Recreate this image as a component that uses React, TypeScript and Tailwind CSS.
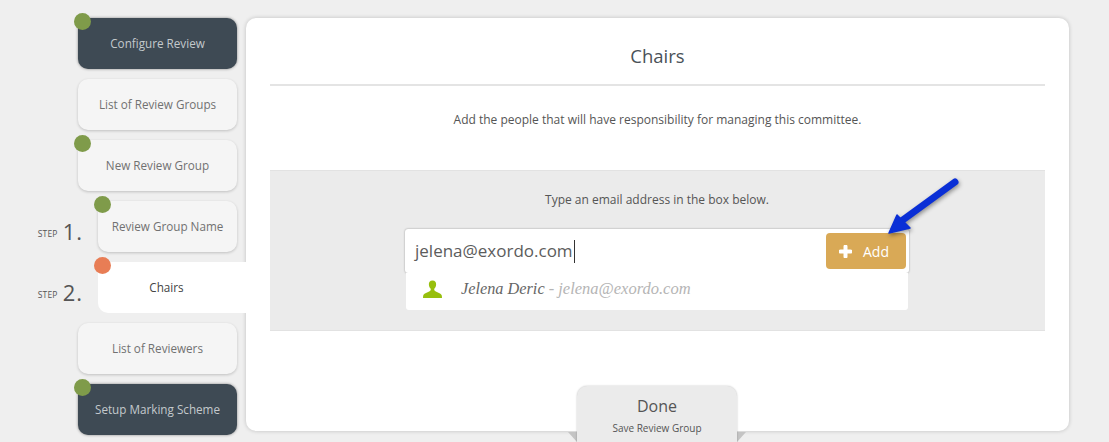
const sans = "font-['Open_Sans',sans-serif]"

type StepProps = {
    label: string
    dot?: "green" | "orange"
    dark?: boolean
    indent?: boolean
    active?: boolean
    step?: string
}

const steps: StepProps[] = [
    { label: "Configure Review", dot: "green", dark: true },
    { label: "List of Review Groups" },
    { label: "New Review Group", dot: "green" },
    { label: "Review Group Name", dot: "green", indent: true, step: "1." },
    { label: "Chairs", dot: "orange", indent: true, active: true, step: "2." },
    { label: "List of Reviewers" },
    { label: "Setup Marking Scheme", dot: "green", dark: true },
]

function StepItem({ label, dot, dark, indent, active, step }: StepProps) {
    return (
        <div className="flex h-[51px]">
            <div className={`flex shrink-0 items-center justify-end ${indent ? "w-[98px] pr-[15px]" : "w-[78px]"}`}>
                {step && (
                    <div className="mt-[9px] flex items-center gap-[5px] text-[#555]">
                        <span className="mt-[6px] text-[8.5px] leading-none tracking-[0.2px]">STEP</span>
                        <span className="text-[22px] leading-none tracking-[1px]">{step}</span>
                    </div>
                )}
            </div>
            <div
                className={`relative flex items-center justify-center text-[11.7px] ${
                    active
                        ? "z-10 w-[148px] rounded-l-[10px] bg-white text-[#444]"
                        : dark
                          ? "w-[159px] rounded-[10px] bg-[#3e4a54] text-[#c4c9cc] shadow-[0_0_3px_rgba(0,0,0,0.45)]"
                          : `rounded-[10px] bg-[#f5f5f5] text-[#717171] shadow-[0_1px_3px_rgba(0,0,0,0.2)] ${indent ? "w-[139px]" : "w-[159px]"}`
                }`}
            >
                {dot && (
                    <span
                        className={`absolute top-[-5px] left-[-4px] h-[17px] w-[17px] rounded-full ${
                            dot === "green" ? "bg-[#7f9b4a]" : "bg-[#e87d55]"
                        }`}
                    />
                )}
                <span className={active ? "pr-[11px]" : ""}>{label}</span>
            </div>
        </div>
    )
}

function PlusIcon() {
    return (
        <svg width="13" height="13" viewBox="0 0 13 13" className="shrink-0">
            <path d="M6.5 1.5v10M1.500 6.5h10" stroke="#fff" strokeWidth="4" strokeLinecap="round" />
        </svg>
    )
}

function PersonIcon() {
    return (
        <svg width="19" height="19" viewBox="0 0 20 19" className="mb-[5px]">
            <path
                d="M10 0C7.2 0 6 2 6.2 4.4c.1 1.7.9 3.2 1.8 4.1.3.4.3 1.700-.3 2.200C6 12.100 1.200 13.300.4 15.200.1 16 0 17.200 0 18.500h20c0-1.300-.1-2.500-.4-3.300-.8-1.900-5.600-3.100-7.300-4.500-.6-.5-.6-1.800-.3-2.200.9-.9 1.700-2.400 1.800-4.100C14 2 12.800 0 10 0z"
                fill="#97bf0d"
            />
        </svg>
    )
}

function BlueArrow() {
    return (
        <svg width="90" height="70" viewBox="0 0 90 70" className="absolute top-[154px] left-[636px] z-20 overflow-visible drop-shadow-[1px_2px_2px_rgba(0,0,0,0.4)]">
            <path d="M73 10 L18 50" stroke="#0a2fd6" strokeWidth="7" strokeLinecap="round" fill="none" />
            <path d="M7 61 L15 43 L28 56 Z" fill="#0a2fd6" stroke="#0a2fd6" strokeWidth="1.500" strokeLinejoin="round" />
        </svg>
    )
}

export default function App() {
    return (
        <div className={`h-[442px] w-[1109px] overflow-hidden bg-[#efefef] ${sans}`}>
            <div className="flex pt-[18px]">
                <div className="flex w-[246px] shrink-0 flex-col gap-[10px]">
                    {steps.map(s => (
                        <StepItem key={s.label} {...s} />
                    ))}
                </div>

                <div className="relative h-[413px] w-[823px] rounded-[10px] bg-white px-[24px] shadow-[0_0_4px_rgba(0,0,0,0.2)]">
                    <div className="flex h-[68px] items-end justify-center border-b-2 border-[#e4e4e4] pb-[16px] text-[18.5px] leading-[24px] text-[#4a5158]">
                        Chairs
                    </div>
                    <p className="mt-[26px] text-center text-[12px] leading-[16px] text-[#555]">
                        Add the people that will have responsibility for managing this committee.
                    </p>

                    <div className="mt-[42px] flex h-[161px] flex-col items-center border-y border-[#e2e2e2] bg-[#ebebeb] pr-px">
                        <p className="mt-[21px] text-[12px] leading-[16px] text-[#555]">Type an email address in the box below.</p>
                        <div className="mt-[21px] flex h-[44px] w-[504px] items-center justify-between rounded-[3px] bg-white pr-[3px] pl-[10px] shadow-[0_0_2px_rgba(0,0,0,0.4)]">
                            <div className="flex items-center text-[17px] leading-[24px] text-[#5c5c5c]">
                                jelena@exordo.com
                                <span className="ml-px h-[23px] w-px bg-[#333]" />
                            </div>
                            <button className="flex h-[36px] w-[80px] items-center justify-center gap-[11px] rounded-[4px] bg-[#d9a956] pr-[4px] text-[14px] text-white">
                                <PlusIcon />
                                Add
                            </button>
                        </div>
                        <div className="flex h-[37px] w-[502px] items-center rounded-b-[3px] bg-white pl-[17px] font-['Liberation_Serif',serif] text-[16.3px] italic">
                            <PersonIcon />
                            <span className="mb-[4px] ml-[19px] text-[#666]">Jelena Deric</span>
                            <span className="mb-[4px] ml-[4px] text-[16.5px] text-[#b5b5b5]">- jelena@exordo.com</span>
                        </div>
                    </div>

                    <BlueArrow />

                    <div className="absolute top-[368px] left-[331px] z-10 flex h-[70px] w-[160px] flex-col items-center rounded-t-[10px] bg-[#ebebeb] pt-[9px] shadow-[0_0_2px_rgba(0,0,0,0.25)]">
                        <span className="text-[16px] leading-[22px] text-[#555]">Done</span>
                        <span className="mt-[4px] text-[10px] leading-[14px] text-[#555]">Save Review Group</span>
                    </div>
                    <span className="absolute top-[414px] left-[322px] h-0 w-0 border-t-[10px] border-l-[9px] border-t-[#c4c4c4] border-l-transparent" />
                    <span className="absolute top-[414px] left-[491px] h-0 w-0 border-t-[10px] border-r-[9px] border-t-[#c4c4c4] border-r-transparent" />
                </div>
            </div>
        </div>
    )
}
